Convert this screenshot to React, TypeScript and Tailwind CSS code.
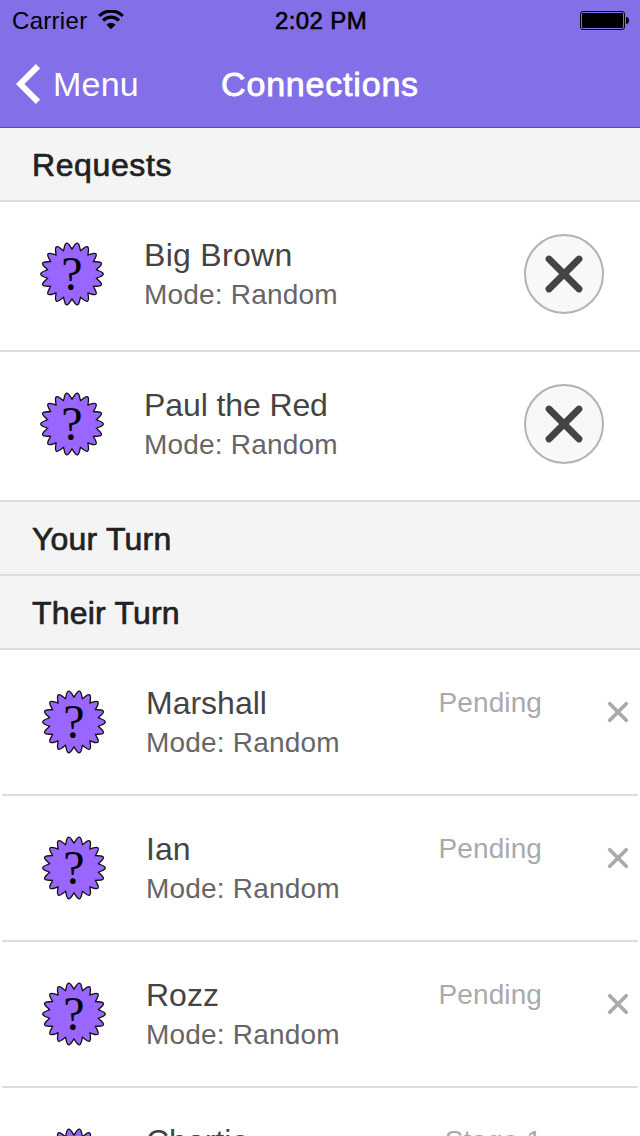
import type { ReactNode } from "react";

const SPIKES = 18;

function sealPath(): string {
  const step = (Math.PI * 2) / SPIKES;
  const at = (r: number, a: number) =>
    `${(32 + r * Math.sin(a)).toFixed(2)} ${(32 - r * Math.cos(a)).toFixed(2)}`;
  let d = `M${at(24.8, 0)}`;
  for (let i = 0; i < SPIKES; i++) {
    const a = i * step;
    d += `C${at(27.5, a + step * 0.2)} ${at(31.3, a + step * 0.3)} ${at(31.3, a + step * 0.5)}`;
    d += `C${at(31.3, a + step * 0.7)} ${at(27.5, a + step * 0.8)} ${at(24.8, a + step)}`;
  }
  return d + "Z";
}

const SEAL = sealPath();

function Badge() {
  return (
    <svg viewBox="0 0 64 64" className="size-16 shrink-0">
      <path d={SEAL} fill="#9966ff" stroke="#111" strokeWidth="1.3" />
      <text x="32" y="47.500" textAnchor="middle" className="font-['Liberation_Serif',serif] text-[48px]">
        ?
      </text>
    </svg>
  );
}

function Cross({ className, width }: { className: string; width: number }) {
  return (
    <svg viewBox="0 0 40 40" className={className} fill="none" stroke="currentColor" strokeWidth={width} strokeLinecap="round">
      <path d="M5 5L35 35M35 5L5 35" />
    </svg>
  );
}

function Section({ title, className }: { title: string; className: string }) {
  return (
    <h2 className="h-[74px] border-b-2 border-[#dcdcdc] bg-[#f4f4f4] pl-8 text-[32px] leading-[74px] text-[#222] [-webkit-text-stroke:0.7px_#222]">
      <span className={className}>{title}</span>
    </h2>
  );
}

function Person({ name, tracking = "tracking-normal", children }: { name: string; tracking?: string; children?: ReactNode }) {
  return (
    <>
      <Badge />
      <div className="-mt-[7px] ml-10 grow whitespace-nowrap">
        <div className={`text-[32px] leading-[40px] text-[#444] ${tracking}`}>{name}</div>
        <div className="text-[28px] leading-[40px] tracking-[0.2px] text-[#666]">Mode: Random</div>
      </div>
      {children}
    </>
  );
}

function RequestRow({ name, tracking }: { name: string; tracking: string }) {
  return (
    <li className="flex h-[150px] items-start border-b-2 border-[#dcdcdc] pt-8 pr-9 pl-10">
      <div className="flex grow pt-2">
        <Person name={name} tracking={tracking} />
      </div>
      <button className="flex size-20 items-center justify-center rounded-full border-2 border-[#b2b2b2] bg-[#f8f8f8] text-[#444]">
        <Cross className="size-10" width={6.8} />
      </button>
    </li>
  );
}

function TurnRow({ name, status }: { name: string; status: string }) {
  return (
    <li className="mx-0.5 flex h-[146px] shrink-0 items-start border-b-2 border-[#dcdcdc] pt-10 pl-10">
      <Person name={name} />
      <span className="-mt-[7px] w-[104px] text-right text-[28px] leading-[40px] tracking-[0.1px] whitespace-nowrap text-[#aaa]">
        {status}
      </span>
      <button className="mt-[11px] mr-[9px] ml-[65px] text-[#aaa]">
        <Cross className="size-[22px]" width={6.8} />
      </button>
    </li>
  );
}

export default function App() {
  return (
    <div className="flex h-[1136px] w-[640px] flex-col overflow-hidden bg-white font-['Liberation_Sans',Arial,sans-serif]">
      <header className="h-32 shrink-0 border-b border-[#6044d8] bg-[#836fe7]">
        <div className="grid h-10 grid-cols-3 items-center pr-[10px] pl-3 text-2xl text-black">
          <div className="flex items-center gap-[11px] tracking-[0.3px]">
            <span className="pt-0.5">Carrier</span>
            <svg viewBox="0 0 26 20" className="h-5 w-[26px]">
              <path d="M1.200 6A16.500 16.500 0 0 1 24.800 6" fill="none" stroke="#000" strokeWidth="3.2" />
              <path d="M5 10.500A11.3 11.3 0 0 1 21 10.500" fill="none" stroke="#000" strokeWidth="3.2" />
              <path d="M8.5 14.700A6.4 6.4 0 0 1 17.500 14.700L13 19.200Z" />
            </svg>
          </div>
          <div className="pt-0.5 text-center tracking-[0.4px] [-webkit-text-stroke:0.6px_#000]">2:02 PM</div>
          <svg viewBox="0 0 50 20" className="h-5 w-[50px] justify-self-end">
            <rect x="0.5" y="1.500" width="44" height="18" rx="2.5" fill="none" stroke="#000" />
            <rect x="2" y="3" width="41" height="15" rx="1" />
            <path d="M46 7C50 7 50 14 46 14Z" />
          </svg>
        </div>
        <div className="grid h-[87px] grid-cols-[200px_240px_200px] items-center text-[34px] text-white">
          <div className="flex items-center pl-4 tracking-[0.2px]">
            <svg viewBox="0 0 24 40" className="mr-[13px] h-10 w-6" fill="none" stroke="#fff" strokeWidth="6">
              <path d="M22 2.200L4.200 20L22 37.800" />
            </svg>
            <span className="pt-0.5">Menu</span>
          </div>
          <h1 className="pt-0.5 text-center tracking-[0.8px] [-webkit-text-stroke:0.8px_#fff]">Connections</h1>
        </div>
      </header>
      <Section title="Requests" className="tracking-[0.6px]" />
      <ul>
        <RequestRow name="Big Brown" tracking="tracking-[0.3px]" />
        <RequestRow name="Paul the Red" tracking="tracking-[-0.1px]" />
      </ul>
      <Section title="Your Turn" className="tracking-[0.2px]" />
      <Section title="Their Turn" className="tracking-[0.2px]" />
      <ul className="flex flex-col">
        <TurnRow name="Marshall" status="Pending" />
        <TurnRow name="Ian" status="Pending" />
        <TurnRow name="Rozz" status="Pending" />
        <TurnRow name="Chartie" status="Stage 1" />
      </ul>
    </div>
  );
}
